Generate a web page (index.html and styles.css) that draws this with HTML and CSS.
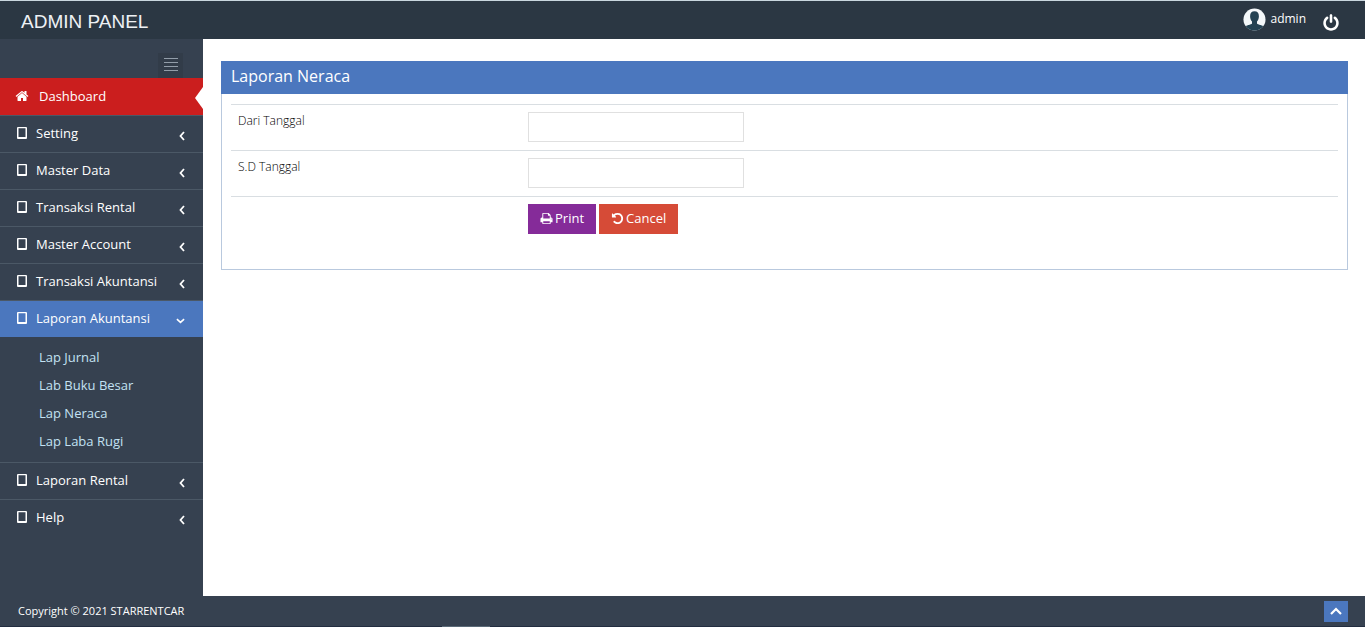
FILE: index.html
```html
<!DOCTYPE html>
<html lang="id">
<head>
<meta charset="utf-8">
<title>Laporan Neraca - Admin Panel</title>
<meta name="viewport" content="width=device-width, initial-scale=1">
<link rel="stylesheet" href="styles.css">
</head>
<body class="page">
<svg class="sprite" aria-hidden="true">
  <symbol id="i-tablet" viewBox="0 0 10 12"><path fill-rule="evenodd" d="M1 0h8q1 0 1 1v10q0 1-1 1h-8q-1 0-1-1v-10q0-1 1-1zM1.500 1.200v8.800h7v-8.800z"/></symbol>
  <symbol id="i-left" viewBox="0 0 6 10"><path d="M5 1 1.500 5 5 9" fill="none" stroke="currentColor" stroke-width="1.800"/></symbol>
  <symbol id="i-down" viewBox="0 0 10 6"><path d="M1 1 5 4.500 9 1" fill="none" stroke="currentColor" stroke-width="1.800"/></symbol>
  <symbol id="i-up" viewBox="0 0 12 8"><path d="M1 7 6 2 11 7" fill="none" stroke="currentColor" stroke-width="2.200"/></symbol>
</svg>

<header class="header">
  <a class="brand" href="#">ADMIN PANEL</a>
  <nav class="user-nav" aria-label="User">
    <a class="user" href="#">
      <svg class="avatar" viewBox="0 0 24 24" aria-hidden="true">
        <defs><clipPath id="disc"><circle cx="12" cy="12" r="11.500"/></clipPath></defs>
        <circle cx="12" cy="12" r="11.500" fill="#f4f8fa"/>
        <path clip-path="url(#disc)" fill="#234253" d="M12 3.500c3 0 4.600 2 4.600 5 0 2.300-.8 4.300-2 5.500v2.300c.7 1.500 6.400 1.500 8.400 4.200V24H1v-3.500c2-2.700 7.700-2.700 8.400-4.200V14c-1.200-1.200-2-3.200-2-5.500 0-3 1.600-5 4.600-5z"/>
      </svg>
      <span>admin</span>
    </a>
    <a class="logout" href="#" aria-label="Log out">
      <svg class="power" viewBox="0 0 1792 1792" aria-hidden="true"><path d="M1664 896q0 156-61 298t-164 245-245 164-298 61-298-61-245-164-164-245-61-298q0-182 80.500-343t226.500-270q43-32 95.500-25t83.500 50q32 42 24.500 94.500t-49.500 84.500q-98 74-151.500 181t-53.500 228q0 104 40.500 198.500t109.500 163.500 163.500 109.500 198.500 40.500 198.500-40.500 163.500-109.500 109.500-163.500 40.500-198.500q0-121-53.500-228t-151.500-181q-42-32-49.500-84.500t24.500-94.500q31-43 84-50t95 25q146 109 226.500 270t80.500 343zm-640-768v640q0 52-38 90t-90 38-90-38-38-90v-640q0-52 38-90t90-38 90 38 38 90z"/></svg>
    </a>
  </nav>
</header>

<div class="body">
  <aside class="sidebar">
    <div class="toggler-row">
      <button class="toggler" type="button" aria-label="Toggle sidebar">
        <svg class="bars" viewBox="0 0 14 13" aria-hidden="true"><path d="M0 .5h14M0 4.500h14M0 8.500h14M0 12.500h14" stroke="currentColor"/></svg>
      </button>
    </div>
    <nav aria-label="Main">
      <ul class="menu">
        <li class="item"><a class="link link-home" href="#">
          <svg class="home" viewBox="0 0 1792 1792" aria-hidden="true"><path d="M1472 992v480q0 26-19 45t-45 19h-384v-384h-256v384h-384q-26 0-45-19t-19-45v-480q0-1 .5-3t.5-3l575-474 575 474q1 2 1 6zm223-69l-62 74q-8 9-21 11h-3q-13 0-21-7l-692-577-692 577q-12 8-24 7-13-2-21-11l-62-74q-8-10-7-23.500t11-21.500l719-599q32-26 76-26t76 26l244 204v-195q0-14 9-23t23-9h192q14 0 23 9t9 23v408l219 182q10 8 11 21.500t-7 23.500z"/></svg>
          <span>Dashboard</span></a></li>
        <li class="item"><a class="link" href="#"><svg class="tablet" aria-hidden="true"><use href="#i-tablet"/></svg><span>Setting</span><svg class="arrow" aria-hidden="true"><use href="#i-left"/></svg></a></li>
        <li class="item"><a class="link" href="#"><svg class="tablet" aria-hidden="true"><use href="#i-tablet"/></svg><span>Master Data</span><svg class="arrow" aria-hidden="true"><use href="#i-left"/></svg></a></li>
        <li class="item"><a class="link" href="#"><svg class="tablet" aria-hidden="true"><use href="#i-tablet"/></svg><span>Transaksi Rental</span><svg class="arrow" aria-hidden="true"><use href="#i-left"/></svg></a></li>
        <li class="item"><a class="link" href="#"><svg class="tablet" aria-hidden="true"><use href="#i-tablet"/></svg><span>Master Account</span><svg class="arrow" aria-hidden="true"><use href="#i-left"/></svg></a></li>
        <li class="item"><a class="link" href="#"><svg class="tablet" aria-hidden="true"><use href="#i-tablet"/></svg><span>Transaksi Akuntansi</span><svg class="arrow" aria-hidden="true"><use href="#i-left"/></svg></a></li>
        <li class="item"><a class="link link-open" href="#" aria-expanded="true"><svg class="tablet" aria-hidden="true"><use href="#i-tablet"/></svg><span>Laporan Akuntansi</span><svg class="arrow arrow-down" aria-hidden="true"><use href="#i-down"/></svg></a>
          <ul class="submenu">
            <li><a class="sublink" href="#">Lap Jurnal</a></li>
            <li><a class="sublink" href="#">Lab Buku Besar</a></li>
            <li><a class="sublink" href="#">Lap Neraca</a></li>
            <li><a class="sublink" href="#">Lap Laba Rugi</a></li>
          </ul>
        </li>
        <li class="item"><a class="link" href="#"><svg class="tablet" aria-hidden="true"><use href="#i-tablet"/></svg><span>Laporan Rental</span><svg class="arrow" aria-hidden="true"><use href="#i-left"/></svg></a></li>
        <li class="item"><a class="link" href="#"><svg class="tablet" aria-hidden="true"><use href="#i-tablet"/></svg><span>Help</span><svg class="arrow" aria-hidden="true"><use href="#i-left"/></svg></a></li>
      </ul>
    </nav>
  </aside>

  <main class="content">
    <section class="portlet">
      <h1 class="portlet-title">Laporan Neraca</h1>
      <form class="form">
        <div class="row"><label class="label" for="from">Dari Tanggal</label><input class="field" id="from" type="text"></div>
        <div class="row"><label class="label" for="to">S.D Tanggal</label><input class="field" id="to" type="text"></div>
        <div class="row">
          <div class="actions">
            <button class="btn btn-print" type="button"><svg class="btn-icon" viewBox="0 0 1792 1792" aria-hidden="true"><path d="M448 1536h896v-256h-896v256zm0-640h896v-384h-160q-40 0-68-28t-28-68v-160h-640v640zm1152 64q0-26-19-45t-45-19-45 19-19 45 19 45 45 19 45-19 19-45zm128 0v416q0 13-9.500 22.500t-22.500 9.500h-224v160q0 40-28 68t-68 28h-960q-40 0-68-28t-28-68v-160h-224q-13 0-22.500-9.500t-9.500-22.500v-416q0-79 56.500-135.500t135.500-56.500h64v-544q0-40 28-68t68-28h672q40 0 88 20t76 48l152 152q28 28 48 76t20 88v256h64q79 0 135.500 56.500t56.500 135.500z"/></svg>Print</button>
            <button class="btn btn-cancel" type="button"><svg class="btn-icon" viewBox="0 0 1792 1792" aria-hidden="true"><path d="M1664 896q0 156-61 298t-164 245-245 164-298 61q-172 0-327-72.500t-264-204.500q-7-10-6.500-22.500t8.500-20.500l137-138q10-9 25-9 16 2 23 12 73 95 179 147t225 52q104 0 198.500-40.500t163.500-109.500 109.500-163.500 40.500-198.500-40.500-198.500-109.500-163.500-163.500-109.500-198.500-40.500q-98 0-188 35.500t-160 101.500l137 138q31 30 14 69-17 40-59 40h-448q-26 0-45-19t-19-45v-448q0-42 40-59 39-17 69 14l130 129q107-101 244.500-156.500t284.500-55.500q156 0 298 61t245 164 164 245 61 298z"/></svg>Cancel</button>
          </div>
        </div>
      </form>
    </section>
  </main>
</div>

<footer class="footer">
  <span>Copyright © 2021 STARRENTCAR</span>
  <a class="to-top" href="#" aria-label="Back to top"><svg class="up" aria-hidden="true"><use href="#i-up"/></svg></a>
</footer>
</body>
</html>
```
FILE: styles.css
```css
* { box-sizing: border-box; }

.page {
  margin: 0;
  min-height: 100vh;
  display: flex;
  flex-direction: column;
  background: #364150;
  color: #000;
  font: 13px/20px "Open Sans", sans-serif;
}

.sprite { position: absolute; width: 0; height: 0; }
svg { display: block; flex: none; fill: currentColor; }
a { color: inherit; text-decoration: none; }
ul { list-style: none; margin: 0; padding: 0; }

.header {
  display: flex;
  justify-content: space-between;
  height: 39px;
  padding: 0 25px 0 21px;
  border-top: 1px solid #c9d6de;
  background: #2b3743;
  color: #fff;
}
.brand { font: 19px/42px "Liberation Sans", Arial, sans-serif; color: #eef1f5; }
.user-nav { display: flex; gap: 16px; }
.user { display: flex; align-items: center; gap: 4px; height: 36px; font-size: 12px; }
.avatar { width: 23px; height: 23px; }
.logout { display: flex; align-items: flex-end; padding-bottom: 7px; }
.power { width: 18px; height: 18px; }

.body { flex: 1; display: flex; }

.sidebar { flex: none; width: 203px; color: #fff; }
.toggler-row { display: flex; justify-content: flex-end; padding: 14px 20px 0 0; }
.toggler {
  display: flex;
  align-items: center;
  justify-content: center;
  width: 25px;
  height: 25px;
  padding: 0 0 2px;
  border: 0;
  background: #323c49;
  color: #929da9;
}
.bars { width: 14px; height: 13px; }

.item { border-bottom: 1px solid #4b5866; }
.item:last-child { border-bottom: 0; }
.link {
  display: flex;
  align-items: center;
  height: 36px;
  padding: 0 18px 2px 17px;
}
.tablet { width: 10px; height: 12px; margin-right: 9px; }
.arrow { width: 6px; height: 10px; margin: 6px 0 0 auto; }
.arrow-down { width: 9px; height: 6px; }
.link-home {
  position: relative;
  height: 37px;
  padding-left: 15px;
  background: #cb1e1e;
}
.link-home::after {
  content: "";
  position: absolute;
  right: 0;
  top: 9px;
  border: solid transparent;
  border-width: 11px 8px 11px 0;
  border-right-color: #fff;
}
.home { width: 14px; height: 14px; margin-right: 10px; }
.link-open { background: #4b77be; }
.submenu { padding: 6px 0 7px; }
.sublink { display: block; padding: 4px 0 4px 39px; color: #c3e1f3; }

.content { flex: 1; padding: 22px 17px 22px 18px; background: #fff; }
.portlet { border: 1px solid #b9c9de; }
.portlet-title {
  margin: -1px -1px 0;
  padding: 3px 10px 6px;
  background: #4b77be;
  color: #fff;
  font-size: 16px;
  font-weight: 400;
  line-height: 24px;
}
.form { padding: 10px 9px 27px; font-size: 12px; }
.row {
  display: grid;
  grid-template-columns: 290px 1fr;
  align-items: start;
  min-height: 46px;
  padding: 7px 7px 8px;
  border-top: 1px solid #d9dee2;
}
.label { font-weight: 300; line-height: 18px; }
.field {
  width: 216px;
  height: 30px;
  padding: 4px 8px;
  border: 1px solid #e0e0e0;
  background: #fff;
  font: inherit;
}
.actions { grid-column: 2; display: flex; gap: 3px; }
.btn {
  display: flex;
  align-items: center;
  gap: 2px;
  height: 30px;
  padding: 0 12px 2px;
  border: 0;
  color: #fff;
  font: inherit;
  font-size: 13px;
}
.btn-icon { width: 13px; height: 13px; }
.btn-print { background: #852b99; }
.btn-cancel { background: #d64b37; }

.footer {
  position: relative;
  display: flex;
  align-items: center;
  justify-content: space-between;
  height: 31px;
  padding: 0 17px 0 18px;
  border-bottom: 1px solid #222d40;
  background: #364150;
  color: #fff;
  font-size: 11px;
}
.footer::after {
  content: "";
  position: absolute;
  left: 442px;
  bottom: -1px;
  width: 48px;
  height: 1px;
  background: #5b6a78;
}
.to-top {
  display: flex;
  align-items: center;
  justify-content: center;
  width: 24px;
  height: 21px;
  background: #4b77be;
}
.up { width: 12px; height: 8px; }
```
